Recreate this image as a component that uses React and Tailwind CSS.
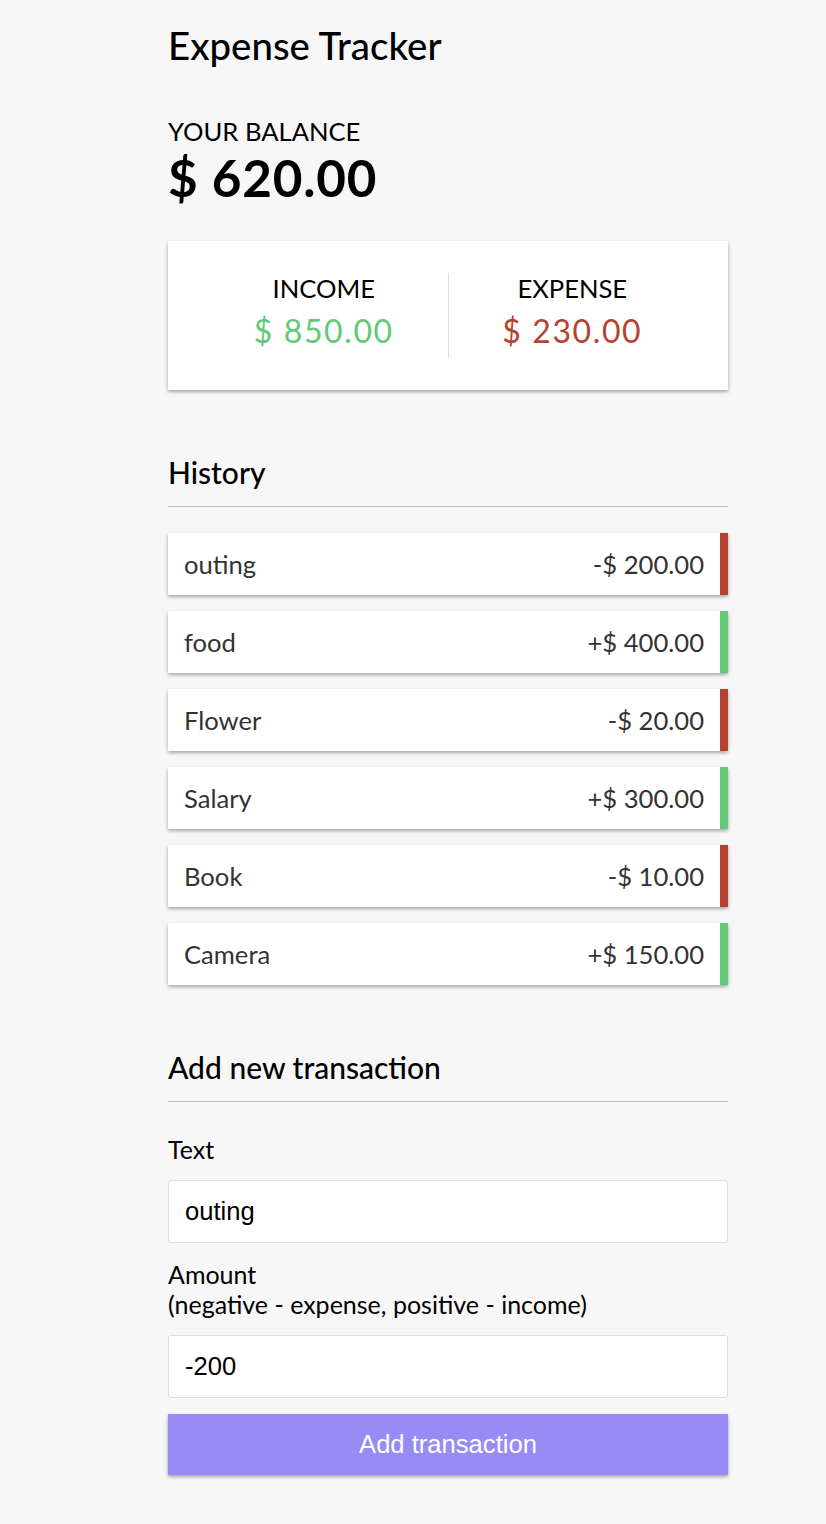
import React from "react";

const items = [
  { text: "outing", amount: "-$ 200.00", plus: false },
  { text: "food", amount: "+$ 400.00", plus: true },
  { text: "Flower", amount: "-$ 20.00", plus: false },
  { text: "Salary", amount: "+$ 300.00", plus: true },
  { text: "Book", amount: "-$ 10.00", plus: false },
  { text: "Camera", amount: "+$ 150.00", plus: true },
];

const shadow =
  "shadow-[0_1.6px_4.8px_rgba(0,0,0,0.12),0_1.6px_3.2px_rgba(0,0,0,0.24)]";

export default function App() {
  return (
    <div className="min-h-screen bg-[#f7f7f7] font-['Lato','Noto_Sans',sans-serif] text-black">
      <div className="w-[560px] ml-[168px] pt-[22px] pb-[48px]">
        <h2 className="text-[38.4px] leading-[1.2] font-medium">
          Expense Tracker
        </h2>

        <h4 className="mt-[48px] text-[25.6px] leading-[1.2] uppercase">
          Your Balance
        </h4>
        <h1 className="text-[51.2px] leading-[1.2] font-bold tracking-[0.8px]">
          $ 620.00
        </h1>

        <div className={`mt-[33px] bg-white ${shadow} p-[32px] flex`}>
          <div className="flex-1 text-center border-r border-[#dedede]">
            <h4 className="text-[25.6px] leading-[1.2] uppercase">Income</h4>
            <p className="my-[8px] text-[32px] leading-[1.2] tracking-[1.6px] text-[#63c878]">
              $ 850.00
            </p>
          </div>
          <div className="flex-1 text-center">
            <h4 className="text-[25.6px] leading-[1.2] uppercase">Expense</h4>
            <p className="my-[8px] text-[32px] leading-[1.2] tracking-[1.6px] text-[#b5422f]">
              $ 230.00
            </p>
          </div>
        </div>

        <h3 className="mt-[64px] text-[30px] leading-[1.2] font-medium pb-[16px] border-b border-[#bbb]">
          History
        </h3>
        <ul className="mt-[26px] flex flex-col gap-[16px]">
          {items.map((it) => (
            <li
              key={it.text}
              className={`bg-white ${shadow} flex justify-between p-[16px] text-[25.6px] leading-[30px] text-[#333] border-r-[8px] ${
                it.plus ? "border-[#63c878]" : "border-[#b5422f]"
              }`}
            >
              <span>{it.text}</span>
              <span>{it.amount}</span>
            </li>
          ))}
        </ul>

        <h3 className="mt-[64px] text-[30px] leading-[1.2] font-medium pb-[16px] border-b border-[#bbb]">
          Add new transaction
        </h3>
        <form onSubmit={(e) => e.preventDefault()}>
          <div>
            <label className="block mt-[32px] mb-[16px] text-[25px] leading-[30px]">
              Text
            </label>
            <input
              type="text"
              defaultValue="outing"
              className="block w-full h-[63px] bg-white border border-[#dedede] rounded-[3px] px-[16px] text-[25.6px] leading-[29px] font-['Liberation_Sans',Arial,sans-serif] outline-none"
            />
          </div>
          <div>
            <label className="block mt-[16px] mb-[16px] text-[25px] leading-[30px]">
              Amount <br />
              (negative - expense, positive - income)
            </label>
            <input
              type="text"
              defaultValue="-200"
              className="block w-full h-[63px] bg-white border border-[#dedede] rounded-[3px] px-[16px] text-[25.6px] leading-[29px] font-['Liberation_Sans',Arial,sans-serif] outline-none"
            />
          </div>
          <button
            type="submit"
            className={`block w-full h-[61px] mt-[16px] bg-[#998bf6] text-white ${shadow} px-[16px] text-[25.6px] leading-[29px] font-['Liberation_Sans',Arial,sans-serif]`}
          >
            Add transaction
          </button>
        </form>
      </div>
    </div>
  );
}
